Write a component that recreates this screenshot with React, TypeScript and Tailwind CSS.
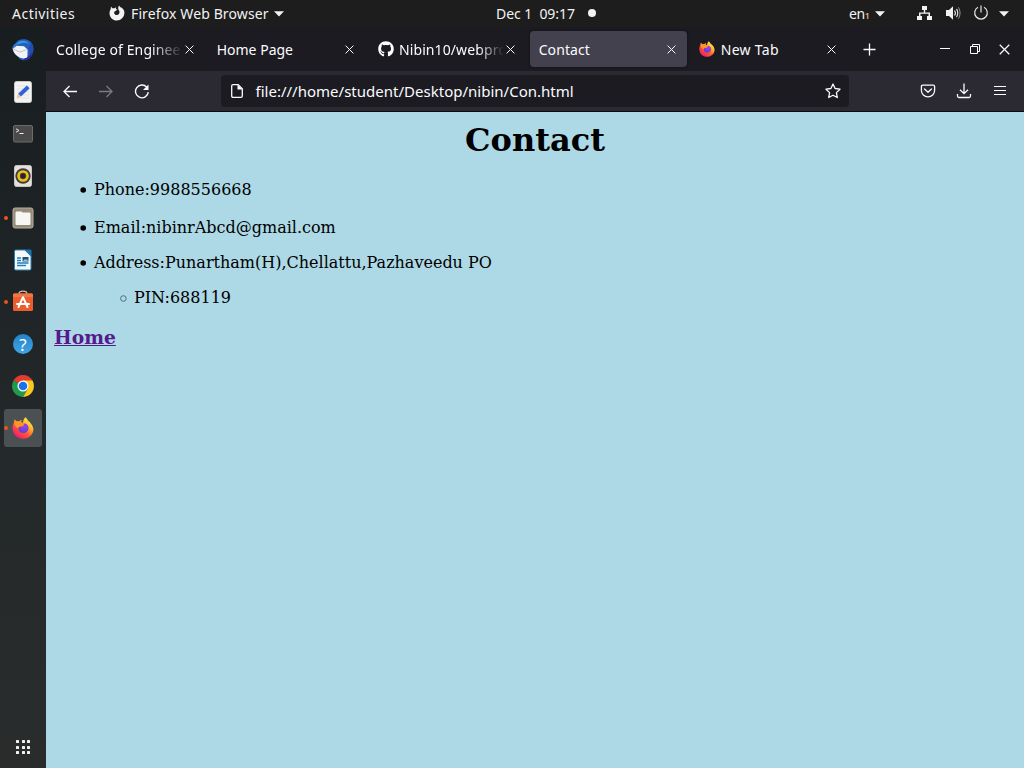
import React from "react";
import { FaGithub } from "react-icons/fa";

const Caret = () => (
  <svg width="10" height="6" viewBox="0 0 10 6" className="shrink-0">
    <path d="M0 .3h10L5 5.5z" fill="#f2f2f2" />
  </svg>
);

const Close = ({ size = 9 }: { size?: number }) => (
  <svg width={size} height={size} viewBox="0 0 9 9" className="shrink-0">
    <path d="M.6.6l7.8 7.8M8.4.6L.6 8.4" stroke="#fbfbfe" strokeWidth="1" fill="none" />
  </svg>
);

function FirefoxLogo({ size, id }: { size: number; id: string }) {
  return (
    <svg width={size} height={size} viewBox="0 0 22 22" className="shrink-0">
      <defs>
        <linearGradient id={id + "a"} x1=".85" y1=".1" x2=".2" y2=".95">
          <stop offset="0" stopColor="#fff04a" />
          <stop offset=".3" stopColor="#ffb52b" />
          <stop offset=".58" stopColor="#ff5a36" />
          <stop offset="1" stopColor="#f5156c" />
        </linearGradient>
        <radialGradient id={id + "b"} cx=".6" cy=".3" r=".8">
          <stop offset="0" stopColor="#a63df0" />
          <stop offset="1" stopColor="#4a46c8" />
        </radialGradient>
      </defs>
      <path
        d="M13.3.3c1.3 1 2.4 2.3 3 3.8 1 .4 1.6 1 2.1 1.8 1.300 1.300 2.700 3.500 3 6.200C21.400 17.500 17 21.800 11.200 21.800 5.300 21.800.6 17.400.5 11.600.4 8.600 1.400 6 2.400 4.200V2.500c.8.500 1.600 1.200 2.200 2 .9-.3 1.800-.3 2.700-.1.700-.8 1.500-1.200 2.500-1.400-.5.700-.8 1.300-.8 2.100l2 .9c.1-2.200.800-4.200 2.300-5.700z"
        fill={"url(#" + id + "a)"}
      />
      <path d="M11.300 6.500c3.400-.2 5.300 2 5.200 4.700-.1 2.900-2.400 4.800-5.200 4.800-2.900 0-4.900-1.900-4.900-4.600 0-.8.200-1.500.6-2.100 1.200.8 2.600.5 4-.4.900-.5 1-1.400.3-2.400z" fill={"url(#" + id + "b)"} />
      <path d="M2.400 4.200V2.500c.8.500 1.600 1.200 2.200 2 .9-.3 1.800-.3 2.700-.1.700-.8 1.500-1.200 2.500-1.400-.5.700-.8 1.300-.8 2.100l2.900 1.500c.2.900-.5 1.500-1.600 1.800l-1.900.6c-.9 1-2 1.200-2.200 2.300C3.700 10 1.800 8 2.400 4.200z" fill="#ff9526" />
    </svg>
  );
}

const Thunderbird = () => (
  <svg width="22" height="22" viewBox="0 0 22 22">
    <path d="M6 1.500C11-.8 18 0 20.600 5.500c2.300 5-.1 13-5.600 15.200-3 1.200-6 .6-8-1.200L3 9c0-3 .5-5.500 3-7.500z" fill="#2160bd" />
    <path d="M5 4C9 .5 15 1 18 6c-3-2.500-7-3-11.500-.5z" fill="#3f94df" />
    <path d="M16 9c3 4 2 8-1 11 4-1.500 6.500-6 6.300-10.500-.3-3-1.300-5-3.300-6.500 1 2 .5 4-2 6z" fill="#274bb0" />
    <path d="M11.500 21.300c4.500-.3 8-3.500 9-8.300-2 3-4 4.800-7 5.500z" fill="#33209a" />
    <path d="M.5 9.500L4.500 6.800l7.500.4 3.600 3.300-.2 7.500c-1.500 1.500-4 1.800-6.400 1-3.500-1.300-7-4-8-8z" fill="#f1f3f6" />
    <path d="M1.500 10l6.300 3.200 7-2.700" fill="none" stroke="#aebccb" strokeWidth=".9" />
    <path d="M.2 10.800C0 7.500 2.500 4 6.500 3.300L4.500 6.800 1.800 9z" fill="#2a7bd8" />
  </svg>
);

const Editor = () => (
  <svg width="18" height="22" viewBox="0 0 18 22">
    <rect x=".5" y=".5" width="17" height="21" rx="2" fill="#f3f3f1" stroke="#c9c9c5" />
    <path d="M3 5h12M3 8h12M3 11h12M3 14h12M3 17h12" stroke="#dededc" strokeWidth=".7" />
    <path d="M12.800 4.400l2.900 2.900-8.700 8.300-2.900-2.900z" fill="#2f62dc" />
    <path d="M4.100 12.700l2.900 2.900-4.400 1.900z" fill="#f0bd94" />
  </svg>
);

const Terminal = () => (
  <svg width="20" height="18" viewBox="0 0 20 18">
    <rect x=".5" y=".5" width="19" height="16.500" rx="1.500" fill="#4a4a4a" stroke="#6c6c6c" />
    <path d="M3 3.800l3 1.700-3 1.700" stroke="#e5e5e5" fill="none" strokeWidth="1" />
    <path d="M6.500 8.500h4" stroke="#f4f4f4" strokeWidth="1" />
  </svg>
);

const Speaker = () => (
  <svg width="18" height="22" viewBox="0 0 18 22">
    <rect x=".5" y=".5" width="17" height="21" rx="2" fill="#e5e1da" stroke="#cbc6bd" />
    <circle cx="9" cy="11" r="7.700" fill="#3d3d3d" />
    <circle cx="9" cy="11" r="4.500" fill="none" stroke="#f1bd16" strokeWidth="2.700" />
    <circle cx="9" cy="11" r="2" fill="#242424" />
  </svg>
);

const Files = () => (
  <svg width="22" height="22" viewBox="0 0 22 22">
    <rect x="1" y="1" width="20" height="20" rx="2" fill="#958c7b" stroke="#b5ad9e" />
    <path d="M3.500 6c0-1 .5-1.500 1.500-1.500h4.500l1 1H17c1 0 1.500.5 1.500 1.500v9.500c0 1-.5 1.500-1.500 1.500H5c-1 0-1.500-.5-1.500-1.500z" fill="#f7f6f4" />
  </svg>
);

const Writer = () => (
  <svg width="18" height="22" viewBox="0 0 18 22">
    <path d="M2 1h9l6 6v12.500c0 .8-.5 1.500-1.500 1.500H2c-.8 0-1.500-.5-1.500-1.500v-17C.5 1.700 1 1 2 1z" fill="#f4f8fb" stroke="#2c83b8" />
    <path d="M10 .6h6c1 0 1.500.6 1.500 1.500V8z" fill="#1877b2" />
    <path d="M3 9h4M3 11.500h4M3 14h11.500M3 16.500h9" stroke="#207fb9" strokeWidth="1.300" />
    <rect x="8.500" y="8" width="6" height="4.500" fill="#1e526f" />
    <path d="M9 12l2-2 1 1 1-1 1 2z" fill="#8ac4df" />
  </svg>
);

const Software = () => (
  <svg width="22" height="22" viewBox="0 0 22 22" className="mb-[2px]">
    <path d="M7 4c0-2 1.500-2.800 4-2.800S15 2 15 4" fill="none" stroke="#d6c1a0" strokeWidth="1.200" />
    <rect x="1" y="3.500" width="20" height="17.500" rx="1.500" fill="#ea5e2d" />
    <path d="M1 5c0-1 .5-1.500 1.500-1.500h17c1 0 1.500.5 1.500 1.500v2H1z" fill="#f17646" />
    <path d="M6.500 17L11 7.200 15.500 17M5 14h12" fill="none" stroke="#fff" strokeWidth="2" strokeLinecap="round" strokeLinejoin="round" />
  </svg>
);

const Help = () => (
  <span className="flex h-5 w-5 items-center justify-center rounded-full bg-linear-to-b from-[#2382ca] to-[#42a5e4] font-['Noto_Sans',sans-serif] text-[17px] leading-none text-white">
    ?
  </span>
);

const Chrome = () => (
  <svg width="22" height="22" viewBox="0 0 22 22">
    <path d="M11 11L1.500 5.500A11 11 0 0 1 20.500 5.500z" fill="#e33b2e" />
    <path d="M11 11L1.500 5.500A11 11 0 0 0 11 22L15.500 14z" fill="#229a4b" />
    <path d="M11 5.500h9.500A11 11 0 0 1 11 22l4.800-8.300z" fill="#fcc71f" />
    <circle cx="11" cy="11" r="5.500" fill="#fff" />
    <circle cx="11" cy="11" r="4.300" fill="#1b72e8" />
  </svg>
);

const dock = [
  { icon: <Thunderbird /> },
  { icon: <Editor /> },
  { icon: <Terminal /> },
  { icon: <Speaker /> },
  { icon: <Files />, running: true },
  { icon: <Writer /> },
  { icon: <Software />, running: true },
  { icon: <Help /> },
  { icon: <Chrome /> },
  { icon: <FirefoxLogo size={22} id="dock" />, running: true, active: true },
];

function TopBar() {
  return (
    <header className="flex h-[27px] shrink-0 items-center bg-[#1d1d1d] text-[14px] leading-[27px] text-[#f2f2f2]">
      <div className="w-[109px] pl-3 tracking-[0.480px]">Activities</div>
      <svg width="16" height="16" viewBox="0 0 16 16" className="mb-px shrink-0">
        <path d="M2 1.600l1.400 1.600h2l1.700-1-.2 1.700 1.600.8-2.200 1.200c-.9.500-1.400 1.400-1.100 2.400.4 1.300 1.800 2.100 3.200 1.700 1.500-.4 2.300-1.800 2.100-3.200-.2-1.400-1.500-2.200-1.300-4 0-1 .4-1.800 1-2.400l.8 1.600 1.300.4C14.700 3.800 15.500 5.900 15.400 8c-.2 4.300-3.500 7.500-7.500 7.500C3.600 15.500.5 12.200.5 8.200c0-1.600.4-3 1.200-4.200z" fill="#f2f2f2" />
      </svg>
      <div className="w-[149px] pl-1.5 tracking-[0.120px] whitespace-nowrap">Firefox Web Browser</div>
      <Caret />
      <div className="ml-[212px] w-[92px] whitespace-pre tracking-[-0.050px]">Dec 1  09:17</div>
      <span className="mb-px h-2 w-2 rounded-full bg-[#f2f2f2]" />
      <div className="ml-[253px] w-[26px] whitespace-nowrap pt-px tracking-[-0.3px]">
        en<span className="text-[8px] font-semibold text-[#e9bd99]">1</span>
      </div>
      <Caret />
      <svg width="16" height="16" viewBox="0 0 16 16" className="mb-[2px] ml-[32px] shrink-0">
        <path d="M5 1h5v4H8.200v2.500H13V11h2v4h-5v-4h1.500V8.800h-8V11H5v4H0v-4h2V7.500h4.800V5H5z" fill="#f2f2f2" />
      </svg>
      <svg width="16" height="16" viewBox="0 0 16 16" className="mb-px ml-[12px] shrink-0">
        <path d="M1 5h3l4-3.800v13.600L4 11H1z" fill="#f2f2f2" />
        <path d="M9.500 5.500c1 1.300 1 3.700 0 5M11.500 4c1.700 2 1.700 6 0 8" fill="none" stroke="#e2e2e2" strokeWidth="1.200" />
        <path d="M13.300 2.300c2.300 3.200 2.300 8.200 0 11.400" fill="none" stroke="#999" strokeWidth="1" />
      </svg>
      <svg width="16" height="16" viewBox="0 0 16 16" className="mb-px ml-[11.500px] shrink-0">
        <path d="M5 2.200a6.300 6.300 0 1 0 6 0M8 .5v7" fill="none" stroke="#e6e6e6" strokeWidth="1.200" />
      </svg>
      <span className="ml-[10.500px] flex">
        <Caret />
      </span>
    </header>
  );
}

function Dock() {
  return (
    <aside className="flex w-[46px] shrink-0 flex-col gap-1 bg-linear-to-b from-[#181d1f] via-[#22282a] to-[#2a2c2c] px-1 pt-1">
      {dock.map((d, i) => (
        <div
          key={i}
          className={
            d.active
              ? "relative flex h-[38px] items-center justify-center rounded-[3px] bg-[#4b5153]"
              : "relative flex h-[38px] items-center justify-center"
          }
        >
          {d.running && <span className="absolute top-[17px] left-0 h-[3.500px] w-[3.500px] rounded-full bg-[#e95420]" />}
          {d.icon}
        </div>
      ))}
      <div className="mt-auto flex h-[42px] items-center justify-center">
        <div className="grid grid-cols-3 gap-[2.500px]">
          {Array.from({ length: 9 }, (_, i) => (
            <span key={i} className="h-[3px] w-[3px] rounded-[0.5px] bg-[#f0f0f0]" />
          ))}
        </div>
      </div>
    </aside>
  );
}

function Tabs() {
  const tabs = [
    { label: "College of Enginee", text: "tracking-[0.110px]", fade: true },
    { label: "Home Page", text: "tracking-[0px]" },
    { label: "Nibin10/webpro", text: "tracking-[0.100px]", fade: true, icon: <FaGithub size={16} className="mr-[5px] ml-[0.600px] shrink-0 text-white" /> },
    { label: "Contact", text: "pl-[0.600px] tracking-[0.100px]", active: true },
    { label: "New Tab", text: "tracking-[0.300px]", icon: <span className="mr-1.5 shrink-0"><FirefoxLogo size={16} id="tab" /></span> },
  ];
  return (
    <div className="flex h-11 shrink-0 items-center bg-[#1c1b22] text-[14px] text-[#fbfbfe]">
      {tabs.map((t) => (
        <div key={t.label} className="flex h-9 w-[160.7px] shrink-0 px-0.5">
          <div
            className={
              t.active
                ? "flex w-full items-center rounded-[4px] bg-[#42414d] pr-[11px] pl-2 shadow-[0_0_3px_rgba(0,0,0,0.5)]"
                : "flex w-full items-center pr-[11px] pl-2"
            }
          >
            {t.icon}
            <span
              className={
                (t.fade ? "mask-r-from-75% mask-r-to-100% " : "") + "min-w-0 flex-1 overflow-hidden whitespace-nowrap " + t.text
              }
            >
              {t.label}
            </span>
            <span className={t.fade ? "ml-[2px] flex" : "ml-1 flex"}>
              <Close />
            </span>
          </div>
        </div>
      ))}
      <svg width="13" height="13" viewBox="0 0 13 13" className="ml-[13.500px] shrink-0">
        <path d="M6.500.5v12M.5 6.500h12" stroke="#fbfbfe" strokeWidth="1.300" />
      </svg>
      <svg width="10" height="2" viewBox="0 0 10 2" className="ml-[64px] shrink-0">
        <path d="M0 .5h10" stroke="#fbfbfe" />
      </svg>
      <svg width="12" height="12" viewBox="0 0 12 12" className="ml-[19px] shrink-0">
        <path d="M1.500 3.500h7v7h-7zM3.500 3V1.500h7v7H9" fill="none" stroke="#fbfbfe" />
      </svg>
      <span className="ml-[18.500px] flex">
        <Close size={11} />
      </span>
    </div>
  );
}

function NavBar() {
  return (
    <div className="flex h-[41px] shrink-0 items-center border-b border-[#0c0c0d] bg-[#2b2a33]">
      <svg width="16" height="16" viewBox="0 0 16 16" className="ml-4 shrink-0">
        <path d="M15 8.500H2M7.500 3L2 8.500 7.500 14" fill="none" stroke="#fbfbfe" strokeWidth="1.300" />
      </svg>
      <svg width="16" height="16" viewBox="0 0 16 16" className="ml-5 shrink-0">
        <path d="M1 8.500h13M8.500 3L14 8.500 8.500 14" fill="none" stroke="#7b7a82" strokeWidth="1.300" />
      </svg>
      <svg width="16" height="16" viewBox="0 0 16 16" className="ml-5 shrink-0">
        <path d="M14.300 9.200A6.400 6.400 0 1 1 12.600 4" fill="none" stroke="#fbfbfe" strokeWidth="1.400" />
        <path d="M14.500 1.500v5.500H9z" fill="#fbfbfe" />
      </svg>
      <div className="ml-[71px] flex h-8 w-[628px] shrink-0 items-center rounded-[4px] bg-[#1c1b22] pr-2 pl-[9px]">
        <svg width="14" height="16" viewBox="0 0 14 16" className="shrink-0">
          <path d="M1.700 3c0-1 .5-1.400 1.300-1.400h5.200l4.100 4.100V13c0 1-.5 1.400-1.300 1.400H3c-.8 0-1.300-.5-1.300-1.400z" fill="none" stroke="#fbfbfe" strokeWidth="1.300" />
          <path d="M7.500 1.500v5h5z" fill="#fbfbfe" />
        </svg>
        <span className="ml-[11.500px] flex-1 text-[15px] tracking-[0.010px] whitespace-nowrap text-[#fbfbfe]">
          file:///home/student/Desktop/nibin/Con.html
        </span>
        <svg width="16" height="16" viewBox="0 0 16 16" className="shrink-0">
          <path d="M8 1l2.100 4.500 4.900.7-3.600 3.400.9 4.900L8 12.200l-4.300 2.300.9-4.900L1 6.200l4.900-.7z" fill="none" stroke="#fbfbfe" strokeWidth="1.300" strokeLinejoin="round" />
        </svg>
      </div>
      <svg width="16" height="16" viewBox="0 0 16 16" className="ml-[71px] shrink-0">
        <path d="M2.700 2.200h10.600c.8 0 1.300.5 1.300 1.300V7.500a6.600 6.300 0 0 1-13.200 0V3.500c0-.8.500-1.300 1.300-1.300zM4.500 6L8 9.200 11.500 6" fill="none" stroke="#fbfbfe" strokeWidth="1.300" strokeLinecap="round" strokeLinejoin="round" />
      </svg>
      <svg width="16" height="16" viewBox="0 0 16 16" className="ml-5 shrink-0">
        <path d="M8 .5v10M4 6.700l4 4 4-4M1.500 11v2c0 1 .5 1.500 1.500 1.500h10c1 0 1.500-.5 1.500-1.500v-2" fill="none" stroke="#fbfbfe" strokeWidth="1.300" />
      </svg>
      <svg width="16" height="16" viewBox="0 0 16 16" className="ml-5 shrink-0">
        <path d="M2 3.500h12M2 7.500h12M2 11.500h12" fill="none" stroke="#fbfbfe" strokeWidth="1.200" />
      </svg>
    </div>
  );
}

const Disc = () => (
  <svg width="6" height="6" viewBox="0 0 6 6" className="mt-px mr-2 shrink-0">
    <circle cx="3.200" cy="3" r="2.800" fill="#000" />
  </svg>
);

const Ring = () => (
  <svg width="7" height="7" viewBox="0 0 7 7" className="mt-px mr-[7px] shrink-0">
    <circle cx="3.400" cy="3.500" r="2.800" fill="none" stroke="#4d626a" strokeWidth=".9" />
  </svg>
);

function Page() {
  return (
    <main className="flex-1 bg-[#add8e6] px-2 pt-[9px] font-['DejaVu_Serif',serif] text-[16px] leading-[19px] text-black">
      <h1 className="text-center text-[32px] leading-[38px] font-bold">Contact</h1>
      <ul className="mt-[21px] pl-[26px]">
        <li className="flex items-center"><Disc />Phone:9988556668</li>
        <li className="mt-[19px] flex items-center"><Disc />Email:nibinrAbcd@gmail.com</li>
        <li className="mt-4">
          <div className="flex items-center"><Disc />Address:Punartham(H),Chellattu,Pazhaveedu PO</div>
          <ul className="mt-4 pl-10">
            <li className="flex items-center">
              <Ring />
              PIN:688119
            </li>
          </ul>
        </li>
      </ul>
      <h3 className="mt-[19px] text-[18.720px] leading-[22px] font-bold">
        <a href="#home" className="text-[#551a8b] underline">Home</a>
      </h3>
    </main>
  );
}

export default function App() {
  return (
    <div className="flex h-[768px] w-[1024px] flex-col overflow-hidden font-['Noto_Sans',sans-serif]">
      <TopBar />
      <div className="flex min-h-0 flex-1">
        <Dock />
        <div className="flex min-w-0 flex-1 flex-col">
          <Tabs />
          <NavBar />
          <Page />
        </div>
      </div>
    </div>
  );
}
